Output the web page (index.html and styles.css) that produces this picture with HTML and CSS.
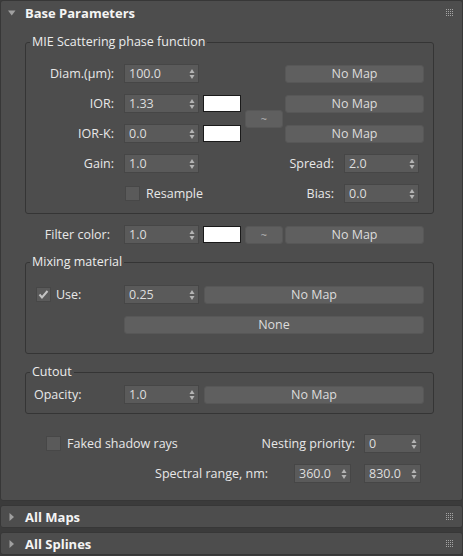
FILE: index.html
```html
<!DOCTYPE html>
<html>
<head>
<meta charset="utf-8">
<link rel="stylesheet" href="styles.css">
</head>
<body>
<div class="rollout main">
  <div class="rhead">
    <svg class="tri-down" width="8" height="6" viewBox="0 0 8 6"><polygon points="0,0.5 7.5,0.5 3.75,5.5"/></svg>
    <span class="rtitle">Base Parameters</span>
    <svg class="grip" width="8" height="8" viewBox="0 0 8 8"><g><rect x="0" y="0" width="1" height="1"/><rect x="2" y="0" width="1" height="1"/><rect x="4" y="0" width="1" height="1"/><rect x="6" y="0" width="1" height="1"/><rect x="0" y="2" width="1" height="1"/><rect x="2" y="2" width="1" height="1"/><rect x="4" y="2" width="1" height="1"/><rect x="6" y="2" width="1" height="1"/><rect x="0" y="4" width="1" height="1"/><rect x="2" y="4" width="1" height="1"/><rect x="4" y="4" width="1" height="1"/><rect x="6" y="4" width="1" height="1"/><rect x="0" y="6" width="1" height="1"/><rect x="2" y="6" width="1" height="1"/><rect x="4" y="6" width="1" height="1"/><rect x="6" y="6" width="1" height="1"/></g></svg>
  </div>
  <div class="rbody">
    <fieldset class="grp grp-mie">
      <legend>MIE Scattering phase function</legend>
      <div class="rows">
        <div class="row">
          <span class="lbl">Diam.(µm):</span>
          <div class="spin"><span class="val">100.0</span><svg class="arr" width="6" height="12" viewBox="0 0 6 12"><polygon points="0.5,5 3,1 5.5,5"/><polygon points="0.5,7 3,11 5.5,7"/></svg></div>
          <button class="btn map">No Map</button>
        </div>
        <div class="pair">
          <div class="pair-col">
            <div class="row">
              <span class="lbl">IOR:</span>
              <div class="spin"><span class="val">1.33</span><svg class="arr" width="6" height="12" viewBox="0 0 6 12"><polygon points="0.5,5 3,1 5.5,5"/><polygon points="0.5,7 3,11 5.5,7"/></svg></div>
              <span class="swatch"></span>
            </div>
            <div class="row">
              <span class="lbl">IOR-K:</span>
              <div class="spin"><span class="val">0.0</span><svg class="arr" width="6" height="12" viewBox="0 0 6 12"><polygon points="0.5,5 3,1 5.5,5"/><polygon points="0.5,7 3,11 5.5,7"/></svg></div>
              <span class="swatch"></span>
            </div>
          </div>
          <button class="btn tilde">~</button>
          <div class="pair-col">
            <button class="btn map">No Map</button>
            <button class="btn map">No Map</button>
          </div>
        </div>
        <div class="row">
          <span class="lbl">Gain:</span>
          <div class="spin"><span class="val">1.0</span><svg class="arr" width="6" height="12" viewBox="0 0 6 12"><polygon points="0.5,5 3,1 5.5,5"/><polygon points="0.5,7 3,11 5.5,7"/></svg></div>
          <span class="lbl-r">Spread:</span>
          <div class="spin spin-r"><span class="val">2.0</span><svg class="arr" width="6" height="12" viewBox="0 0 6 12"><polygon points="0.5,5 3,1 5.5,5"/><polygon points="0.5,7 3,11 5.5,7"/></svg></div>
        </div>
        <div class="row">
          <span class="chk chk-resample"></span>
          <span class="chk-text">Resample</span>
          <span class="lbl-r">Bias:</span>
          <div class="spin spin-r"><span class="val">0.0</span><svg class="arr" width="6" height="12" viewBox="0 0 6 12"><polygon points="0.5,5 3,1 5.5,5"/><polygon points="0.5,7 3,11 5.5,7"/></svg></div>
        </div>
      </div>
    </fieldset>

    <div class="row filter-row">
      <span class="lbl lbl-filter">Filter color:</span>
      <div class="spin"><span class="val">1.0</span><svg class="arr" width="6" height="12" viewBox="0 0 6 12"><polygon points="0.5,5 3,1 5.5,5"/><polygon points="0.5,7 3,11 5.5,7"/></svg></div>
      <span class="swatch"></span>
      <button class="btn tilde">~</button>
      <button class="btn map">No Map</button>
    </div>

    <fieldset class="grp grp-mix">
      <legend>Mixing material</legend>
      <div class="rows">
        <div class="row">
          <span class="lbl-left">
            <span class="chk checked"><svg width="13" height="13" viewBox="0 0 13 13"><polyline points="2.5,6.5 5,9.5 10.5,3" /></svg></span>
            <span class="chk-text">Use:</span>
          </span>
          <div class="spin"><span class="val">0.25</span><svg class="arr" width="6" height="12" viewBox="0 0 6 12"><polygon points="0.5,5 3,1 5.5,5"/><polygon points="0.5,7 3,11 5.5,7"/></svg></div>
          <button class="btn wide">No Map</button>
        </div>
        <div class="row">
          <button class="btn none">None</button>
        </div>
      </div>
    </fieldset>

    <fieldset class="grp grp-cut">
      <legend>Cutout</legend>
      <div class="rows">
        <div class="row">
          <span class="lbl-left lbl-opacity">Opacity:</span>
          <div class="spin"><span class="val">1.0</span><svg class="arr" width="6" height="12" viewBox="0 0 6 12"><polygon points="0.5,5 3,1 5.5,5"/><polygon points="0.5,7 3,11 5.5,7"/></svg></div>
          <button class="btn wide">No Map</button>
        </div>
      </div>
    </fieldset>

    <div class="row fake-row">
      <span class="chk chk-fake"></span>
      <span class="chk-text">Faked shadow rays</span>
      <span class="lbl-r lbl-nest">Nesting priority:</span>
      <div class="spin spin-s"><span class="val">0</span><svg class="arr" width="6" height="12" viewBox="0 0 6 12"><polygon points="0.5,5 3,1 5.5,5"/><polygon points="0.5,7 3,11 5.5,7"/></svg></div>
    </div>

    <div class="row spec-row">
      <span class="lbl-r lbl-spec">Spectral range, nm:</span>
      <div class="spin spin-s"><span class="val">360.0</span><svg class="arr" width="6" height="12" viewBox="0 0 6 12"><polygon points="0.5,5 3,1 5.5,5"/><polygon points="0.5,7 3,11 5.5,7"/></svg></div>
      <div class="spin spin-s spin-gap"><span class="val">830.0</span><svg class="arr" width="6" height="12" viewBox="0 0 6 12"><polygon points="0.5,5 3,1 5.5,5"/><polygon points="0.5,7 3,11 5.5,7"/></svg></div>
    </div>
  </div>
</div>

<div class="rollout closed">
  <div class="rhead">
    <svg class="tri-right" width="6" height="8" viewBox="0 0 6 8"><polygon points="0.5,0 5,4 0.5,8"/></svg>
    <span class="rtitle">All Maps</span>
    <svg class="grip" width="8" height="8" viewBox="0 0 8 8"><g><rect x="0" y="0" width="1" height="1"/><rect x="2" y="0" width="1" height="1"/><rect x="4" y="0" width="1" height="1"/><rect x="6" y="0" width="1" height="1"/><rect x="0" y="2" width="1" height="1"/><rect x="2" y="2" width="1" height="1"/><rect x="4" y="2" width="1" height="1"/><rect x="6" y="2" width="1" height="1"/><rect x="0" y="4" width="1" height="1"/><rect x="2" y="4" width="1" height="1"/><rect x="4" y="4" width="1" height="1"/><rect x="6" y="4" width="1" height="1"/><rect x="0" y="6" width="1" height="1"/><rect x="2" y="6" width="1" height="1"/><rect x="4" y="6" width="1" height="1"/><rect x="6" y="6" width="1" height="1"/></g></svg>
  </div>
</div>

<div class="rollout closed">
  <div class="rhead">
    <svg class="tri-right" width="6" height="8" viewBox="0 0 6 8"><polygon points="0.5,0 5,4 0.5,8"/></svg>
    <span class="rtitle">All Splines</span>
    <svg class="grip" width="8" height="8" viewBox="0 0 8 8"><g><rect x="0" y="0" width="1" height="1"/><rect x="2" y="0" width="1" height="1"/><rect x="4" y="0" width="1" height="1"/><rect x="6" y="0" width="1" height="1"/><rect x="0" y="2" width="1" height="1"/><rect x="2" y="2" width="1" height="1"/><rect x="4" y="2" width="1" height="1"/><rect x="6" y="2" width="1" height="1"/><rect x="0" y="4" width="1" height="1"/><rect x="2" y="4" width="1" height="1"/><rect x="4" y="4" width="1" height="1"/><rect x="6" y="4" width="1" height="1"/><rect x="0" y="6" width="1" height="1"/><rect x="2" y="6" width="1" height="1"/><rect x="4" y="6" width="1" height="1"/><rect x="6" y="6" width="1" height="1"/></g></svg>
  </div>
</div>
</body>
</html>
```

FILE: styles.css
```css
* { box-sizing: border-box; }

html, body {
  margin: 0;
  padding: 0;
}

body {
  width: 463px;
  height: 556px;
  overflow: hidden;
  background: #3b3b3b;
  font-family: "Open Sans", "Noto Sans", sans-serif;
  font-size: 12.5px;
  line-height: 14px;
  color: #e8e8e8;
}

.rollout {
  background: #4d4d4d;
  border: 1px solid #373737;
  border-radius: 3px;
}

.rollout + .rollout { margin-top: 4px; }

.rhead {
  display: flex;
  align-items: center;
  height: 24px;
  padding-left: 7px;
  padding-right: 8px;
}

.main .rhead { padding-bottom: 1px; }

.closed .rhead { height: 21px; }

.tri-down { fill: #a0a0a0; margin-right: 9px; }
.tri-right { fill: #a0a0a0; margin-left: 1px; margin-right: 10px; }

.rtitle {
  font-weight: bold;
  font-size: 13px;
  color: #f4f4f4;
  flex: 1;
}

.grip { fill: #a4a4a4; }

.rbody {
  padding: 10px 0 17px 0;
}

.grp {
  margin: 0 0 0 24px;
  width: 409px;
  border: 1px solid #353535;
  border-radius: 3px;
  padding: 15px 9px 10px 0;
  min-width: 0;
}

.grp legend {
  margin-left: 4px;
  padding: 0 2px;
  line-height: 14px;
  color: #ececec;
}

.grp-mix { margin-top: 11px; padding-top: 16px; padding-bottom: 19px; }
.grp-cut { margin-top: 11px; padding-top: 6px; padding-bottom: 9px; }

.rows {
  display: flex;
  flex-direction: column;
  gap: 11px;
}

.row {
  display: flex;
  align-items: center;
  height: 19px;
}

.pair {
  display: flex;
  align-items: center;
}

.pair-col {
  display: flex;
  flex-direction: column;
  gap: 12px;
}

.pair-col:first-child { gap: 11px; }

.lbl {
  width: 88px;
  margin-right: 10px;
  text-align: right;
  white-space: nowrap;
}

.lbl-filter { width: 109px; margin-right: 14px; }

.lbl-r {
  margin-left: auto;
  margin-right: 10px;
  white-space: nowrap;
}

.lbl-left {
  display: flex;
  align-items: center;
  width: 98px;
  white-space: nowrap;
}

.lbl-opacity { padding-left: 8px; }

.spin {
  display: flex;
  align-items: center;
  width: 75px;
  height: 19px;
  background: #5a5a5a;
  border: 1px solid #464646;
  padding-left: 4px;
  padding-right: 3px;
  color: #dedede;
}

.spin .val { flex: 1; }
.arr { fill: #b4b4b4; }

.spin-r { margin-right: 5px; }
.spin-s { width: 57px; }

.swatch {
  width: 38px;
  height: 17px;
  margin-left: 4px;
  background: #ffffff;
  border: 1px solid #1a1a1a;
}

.btn {
  height: 18px;
  padding: 0;
  margin: 0;
  font-family: inherit;
  font-size: 12.5px;
  line-height: 16px;
  color: #dcdcdc;
  background: #5f5f5f;
  border: 1px solid #575757;
  border-radius: 3px;
  text-align: center;
}

.map { width: 139px; margin-left: auto; }
.pair .tilde + .pair-col .map { margin-left: 2px; }

.tilde {
  width: 38px;
  margin-left: 4px;
  font-size: 11px;
  color: #b8b8b8;
}

.filter-row { margin-top: 11px; }
.filter-row .map { margin-left: 2px; }

.wide { flex: 1; margin-left: 5px; }
.none { flex: 1; margin-left: 98px; }

.chk {
  display: flex;
  align-items: center;
  justify-content: center;
  width: 15px;
  height: 15px;
  background: #5a5a5a;
  border: 1px solid #474747;
  flex: none;
}

.chk svg { fill: none; stroke: #c4c4c4; stroke-width: 2; }

.checked { margin-left: 10px; }
.chk-resample { margin-left: 99px; }
.chk-text { margin-left: 6px; white-space: nowrap; }
.checked + .chk-text { margin-left: 5px; }

.fake-row { margin-top: 20px; padding-right: 41px; }
.chk-fake { margin-left: 45px; }
.lbl-nest { margin-right: 9px; }

.spec-row { margin-top: 11px; padding-right: 41px; }
.lbl-spec { margin-right: 26px; }
.spin-gap { margin-left: 13px; }
```
